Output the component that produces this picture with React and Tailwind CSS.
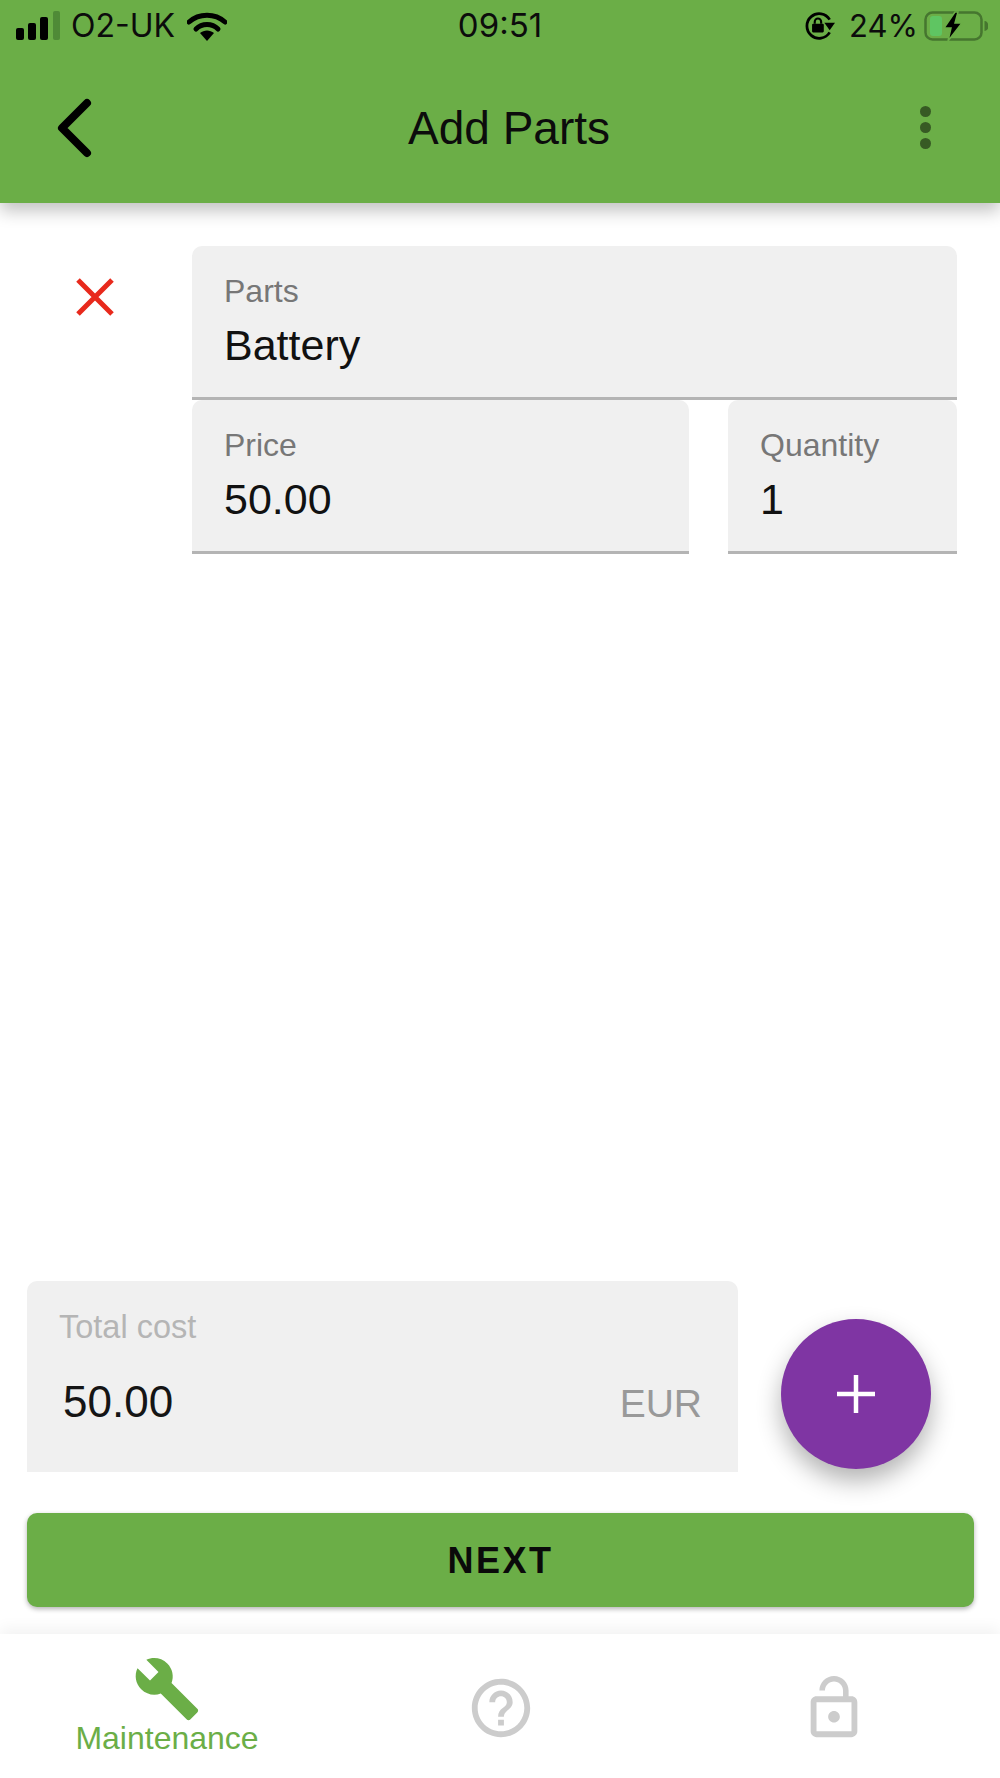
import React from 'react'

const FONT = "font-['Liberation_Sans',Arial,sans-serif]"

function Field({ label, value, className }) {
    return (
        <div className={`bg-[#f0f0f0] rounded-t-[10px] border-b-[3px] border-[#b4b4b4] pl-[32px] pt-[27px] h-[154px] ${className}`}>
            <div className="text-[#777777] text-[32px] leading-[36px]">{label}</div>
            <div className="text-[#111111] text-[43px] leading-[48px] mt-[12px]">{value}</div>
        </div>
    )
}

function StatusBar() {
    return (
        <div className="h-[52px] grid grid-cols-[1fr_auto_1fr] items-center font-['Inter',sans-serif] text-[#0c0c0c]">
            <div className="flex items-center text-[32px]">
                <svg className="ml-[16px]" width="44" height="30" viewBox="0 0 44 30">
                    <rect x="0" y="17" width="8" height="12" rx="2" fill="#000" />
                    <rect x="12" y="12" width="8" height="17" rx="2" fill="#000" />
                    <rect x="24" y="6" width="8" height="23" rx="2" fill="#000" />
                    <rect x="37" y="0" width="7" height="29" rx="2" fill="#4f8a37" />
                </svg>
                <span className="ml-[11px]">O2-UK</span>
                <svg className="ml-[12px]" width="40" height="29" viewBox="0 0 40 29">
                    <path d="M2 10 C12 1 28 1 38 10" fill="none" stroke="#000" strokeWidth="5" strokeLinecap="round" />
                    <path d="M9 17 C15 11 25 11 31 17" fill="none" stroke="#000" strokeWidth="5" strokeLinecap="round" />
                    <path d="M13 21 C17 17.5 23 17.5 27 21 L20 29 Z" fill="#000" />
                </svg>
            </div>
            <span className="text-[33px]">09:51</span>
            <div className="flex items-center justify-end mr-[12px] text-[31px]">
                <svg width="32" height="30" viewBox="0 0 30 28">
                    <path d="M25 20 A11.5 11.5 0 1 1 25 8" fill="none" stroke="#000" strokeWidth="2.6" />
                    <path d="M20 11 L30 11 L25 18 Z" fill="#000" />
                    <rect x="8.5" y="12" width="11" height="8" rx="1" fill="#000" />
                    <path d="M11 12 V10 a3 3 0 0 1 6 0 V12" fill="none" stroke="#000" strokeWidth="2" />
                </svg>
                <span className="ml-[14px]">24%</span>
                <svg className="ml-[6px]" width="64" height="30" viewBox="0 0 64 30">
                    <rect x="1.5" y="1.5" width="56" height="27" rx="7" fill="none" stroke="#46762f" strokeWidth="2.5" />
                    <rect x="6" y="5" width="12" height="20" rx="3" fill="#5fc562" />
                    <path d="M60.5 10 a4 5 0 0 1 0 10 Z" fill="#46762f" />
                    <path d="M31 1 L20 17 H27 L24 30 L38 12 H31 L34 1 Z" fill="#000" stroke="#6bae47" strokeWidth="1.5" />
                </svg>
            </div>
        </div>
    )
}

export default function App() {
    return (
        <div className={`${FONT} w-[1000px] h-[1778px] bg-white flex flex-col overflow-hidden`}>
            <header className="h-[203px] bg-[#6bae47] shadow-[0_8px_16px_rgba(0,0,0,0.24)] relative z-10 shrink-0">
                <StatusBar />
                <div className="h-[151px] flex items-center justify-between">
                    <svg className="ml-[56px]" width="36" height="60" viewBox="0 0 36 60">
                        <path d="M31 5 L6 30 L31 55" fill="none" stroke="#000" strokeWidth="8" strokeLinecap="round" strokeLinejoin="round" />
                    </svg>
                    <h1 className="text-[46px] text-[#0c0c0c] ml-[6px] pt-[2px]">Add Parts</h1>
                    <div className="mr-[69px] flex flex-col gap-[5px]">
                        <div className="w-[11px] h-[11px] rounded-full bg-[#375a24]" />
                        <div className="w-[11px] h-[11px] rounded-full bg-[#375a24]" />
                        <div className="w-[11px] h-[11px] rounded-full bg-[#375a24]" />
                    </div>
                </div>
            </header>

            <main className="flex-1 flex flex-col">
                <div className="flex pt-[43px]">
                    <div className="w-[192px] shrink-0 pl-[76px] pt-[32px]">
                        <svg width="38" height="38" viewBox="0 0 38 38">
                            <path d="M2 2 L36 36 M36 2 L2 36" stroke="#e8291c" strokeWidth="5" />
                        </svg>
                    </div>
                    <div className="w-[765px]">
                        <Field label="Parts" value="Battery" />
                        <div className="flex justify-between">
                            <Field label="Price" value="50.00" className="w-[497px]" />
                            <Field label="Quantity" value="1" className="w-[229px]" />
                        </div>
                    </div>
                </div>

                <div className="mt-auto flex pl-[27px]">
                    <div className="w-[711px] h-[191px] bg-[#f0f0f0] rounded-t-[10px] px-[32px] pt-[28px]">
                        <div className="text-[#b5b5b5] text-[32.5px] leading-[36px]">Total cost</div>
                        <div className="flex justify-between items-center mt-[33px] px-[4px]">
                            <span className="text-[#151515] text-[44px] leading-[48px]">50.00</span>
                            <span className="text-[#999999] text-[39px] leading-[48px] relative top-[2px]">EUR</span>
                        </div>
                    </div>
                    <button className="ml-[43px] mt-[38px] w-[150px] h-[150px] rounded-full bg-[#7f35a3] shadow-[0_12px_24px_rgba(0,0,0,0.3)] flex items-center justify-center">
                        <svg width="38" height="38" viewBox="0 0 38 38">
                            <path d="M19 0 V38 M0 19 H38" stroke="#fff" strokeWidth="4.5" />
                        </svg>
                    </button>
                </div>

                <button className="mt-[41px] ml-[27px] w-[947px] h-[94px] shrink-0 rounded-[10px] bg-[#6bae47] shadow-[0_2px_5px_rgba(0,0,0,0.3)] text-[36px] font-bold tracking-[2.5px] pt-[2px] text-[#0a0a0a]">
                    NEXT
                </button>
                <div className="h-[27px] shrink-0" />
            </main>

            <nav className="h-[144px] shrink-0 bg-white shadow-[0_-6px_14px_rgba(0,0,0,0.05)] flex">
                <div className="w-[334px] flex flex-col items-center pt-[21px]">
                    <svg width="68" height="68" viewBox="0 0 24 24" fill="#6bae47">
                        <path d="M22.7 19l-9.1-9.1c.9-2.3.4-5-1.5-6.9-2-2-5-2.4-7.4-1.3L9 6 6 9 1.6 4.7C.4 7.1.9 10.1 2.9 12.1c1.9 1.9 4.6 2.4 6.9 1.5l9.1 9.1c.4.4 1 .4 1.4 0l2.3-2.3c.5-.4.5-1.1.1-1.4z" />
                    </svg>
                    <span className="text-[#6bae47] text-[32px] leading-[36px] -mt-[3px]">Maintenance</span>
                </div>
                <div className="w-[334px] flex justify-center pt-[39px]">
                    <svg width="70" height="70" viewBox="0 0 24 24" fill="#cccccc">
                        <path d="M11 18h2v-2h-2v2zm1-16C6.48 2 2 6.48 2 12s4.48 10 10 10 10-4.48 10-10S17.52 2 12 2zm0 18c-4.41 0-8-3.59-8-8s3.59-8 8-8 8 3.59 8 8-3.59 8-8 8zm0-14c-2.21 0-4 1.79-4 4h2c0-1.1.9-2 2-2s2 .9 2 2c0 2-3 1.75-3 5h2c0-2.25 3-2.5 3-5 0-2.21-1.79-4-4-4z" />
                    </svg>
                </div>
                <div className="w-[332px] flex justify-center pt-[39px]">
                    <svg width="70" height="70" viewBox="0 0 24 24" fill="#cccccc">
                        <path d="M12 17c1.1 0 2-.9 2-2s-.9-2-2-2-2 .9-2 2 .9 2 2 2zm6-9h-1V6c0-2.76-2.24-5-5-5S7 3.24 7 6h1.9c0-1.71 1.39-3.1 3.1-3.1 1.71 0 3.1 1.39 3.1 3.1v2H6c-1.1 0-2 .9-2 2v10c0 1.1.9 2 2 2h12c1.1 0 2-.9 2-2V10c0-1.1-.9-2-2-2zm0 12H6V10h12v10z" />
                    </svg>
                </div>
            </nav>
        </div>
    )
}
